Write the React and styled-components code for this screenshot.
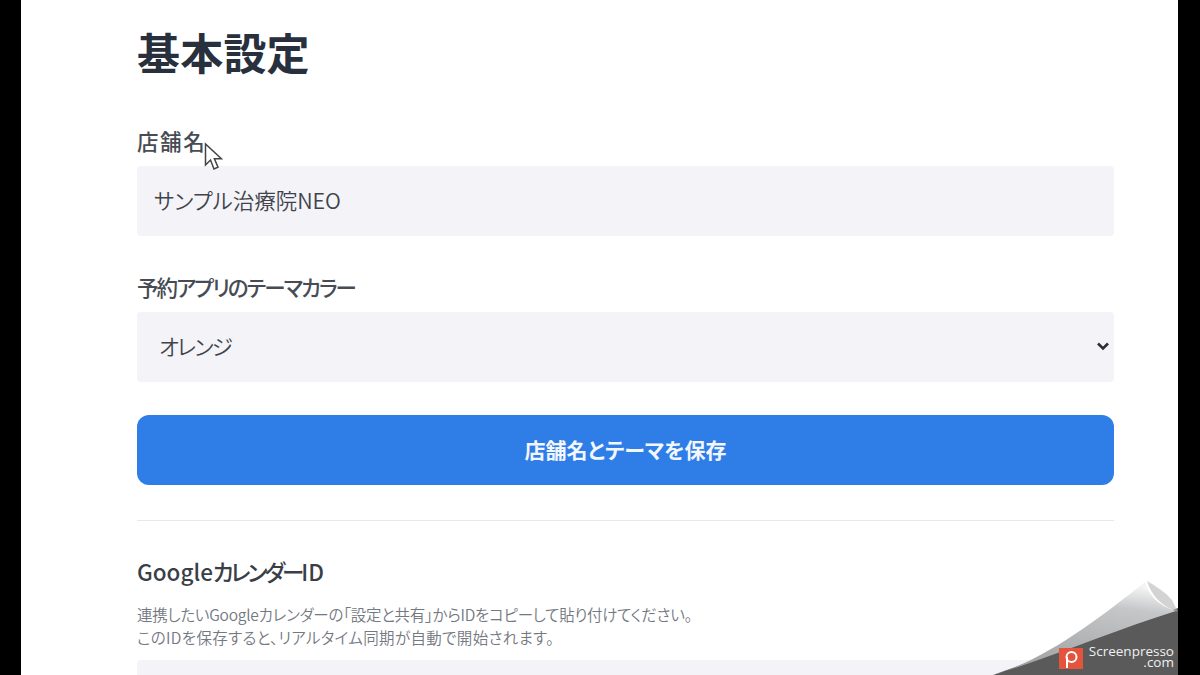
import React from 'react';
import styled, { createGlobalStyle } from 'styled-components';

const Global = createGlobalStyle`
  html, body { margin: 0; padding: 0; width: 1200px; height: 675px; overflow: hidden; background: #000; }
  body { font-family: "Noto Sans CJK JP", "Noto Sans", sans-serif; font-feature-settings: "palt" 1; }
`;
const Frame = styled.div`
  position: relative; width: 1200px; height: 675px; background: #000; overflow: hidden;
  display: flex; padding: 0 22px 0 21px; box-sizing: border-box;
`;
const Page = styled.main`
  flex: 1; background: #fff; padding: 0 64px 0 116px; overflow: hidden; box-sizing: border-box;
  display: flex; flex-direction: column;
`;
const Title = styled.h1`
  margin: 23px 0 0; font-size: 43px; line-height: 56px; font-weight: 600; color: #27303c; height: 56px;
  letter-spacing: 0.2px;
`;
const Label = styled.label`
  display: block; font-size: 21.5px; font-weight: 500; color: #474c54;
  line-height: 30px; margin: ${p => p.$top}px 0 10px; letter-spacing: ${p => p.$ls || 0}px;
`;
const Field = styled.div`
  height: 70px; background: #f4f3f8; border-radius: 4px; display: flex; align-items: center;
  justify-content: space-between; padding: ${p => p.$pad || '0 17px 3px'}; font-size: 21.5px; font-weight: 350; color: #3f444c;
  box-sizing: border-box; flex-shrink: 0; margin-top: ${p => p.$top || 0}px;
`;
const Tight = styled.span`letter-spacing: ${p => p.$ls}px;`;
const Chevron = styled.svg`width: 16px; height: 16px; color: #2b2f36;`;
const SaveButton = styled.button`
  margin-top: 33px; height: 70px; flex-shrink: 0; border: 0; border-radius: 12px; background: #2f7ee8; color: #f2f7fe;
  padding: 0 0 3px; font: 700 21px "Noto Sans CJK JP", sans-serif; font-feature-settings: "palt" 1;
`;
const Divider = styled.hr`
  margin: 35px 0 0; border: 0; border-top: 1px solid #e8e8ea; width: 100%;
`;
const SubTitle = styled.h2`
  margin: 33px 0 0; font-size: 22.5px; line-height: 34px; font-weight: 500; color: #3a3f47; height: 34px;
`;
const Help = styled.p`
  margin: 15px 0 0; font-size: 15.5px; line-height: 23px; font-weight: 350; color: #74787f; height: 46px;
`;
const Cursor = styled.svg`position: absolute; left: 204px; top: 142px; width: 19px; height: 30px;`;
const Curl = styled.svg`position: absolute; left: 990px; top: 578px; width: 190px; height: 97px;`;
const BrandIcon = styled.svg`position: absolute; left: 1059px; top: 648px; width: 24px; height: 21px;`;
const BrandText = styled.div`
  position: absolute; right: 26px; top: 646px; color: #f0f0f0; font: 500 13.500px/11px "Open Sans", sans-serif; text-align: right;
`;

export default function App() {
  return (
    <Frame>
      <Global />
      <Page>
        <Title>基本設定</Title>
        <Label $top={47} $ls={1.6}>店舗名</Label>
        <Field>サンプル治療院NEO</Field>
        <Label $top={36} $ls={-1.9}>予約アプリのテーマカラー</Label>
        <Field $pad="0 3px 3px 22px"><Tight $ls={-1.700}>オレンジ</Tight>
          <Chevron viewBox="0 0 16 16" fill="none" stroke="currentColor" strokeWidth="2.6"><path d="M3 5.500l5 5 5-5" /></Chevron>
        </Field>
        <SaveButton>店舗名とテーマを保存</SaveButton>
        <Divider />
        <SubTitle>Google<Tight $ls={-3}>カレンダー</Tight>ID</SubTitle>
        <Help>
          <Tight $ls={-0.250}>連携したいGoogleカレンダーの「設定と共有」からIDをコピーして貼り付けてください。</Tight><br />
          <Tight $ls={0.350}>このIDを保存すると、リアルタイム同期が自動で開始されます。</Tight>
        </Help>
        <Field $top={11} />
      </Page>
      <Cursor viewBox="0 0 19 30"><path d="M1.500 2v21l5-5 3.500 9 4-1.800-3.600-8.400h7z" fill="#fff" stroke="#444" strokeWidth="1.500" /></Cursor>
      <Curl viewBox="0 0 190 97">
        <defs><linearGradient id="c" x1="0.55" y1="1" x2="0.8" y2="0.05"><stop offset="0" stopColor="#a0a2a4" /><stop offset="0.75" stopColor="#c6c7c9" /><stop offset="1" stopColor="#f4f4f4" /></linearGradient></defs>
        <path d="M3 97 L188 30 V97 Z" fill="#5a5a5a" />
        <path d="M157 3 C161 17 172 29 188 34 L182 22 C175 14 166 8 157 3Z" fill="#b5b5b5" opacity="0.6" />
        <path d="M3 97 C55 82 110 40 155 4 C158 16 168 28 186 33 C125 52 65 78 3 97Z" fill="url(#c)" />
      </Curl>
      <BrandIcon viewBox="0 0 24 21">
        <rect width="24" height="21" fill="#e4533c" />
        <circle cx="12.500" cy="9" r="5" fill="none" stroke="#fff" strokeWidth="2" />
        <path d="M8 9v11" stroke="#fff" strokeWidth="2" />
      </BrandIcon>
      <BrandText>Screenpresso<br />.com</BrandText>
    </Frame>
  );
}
